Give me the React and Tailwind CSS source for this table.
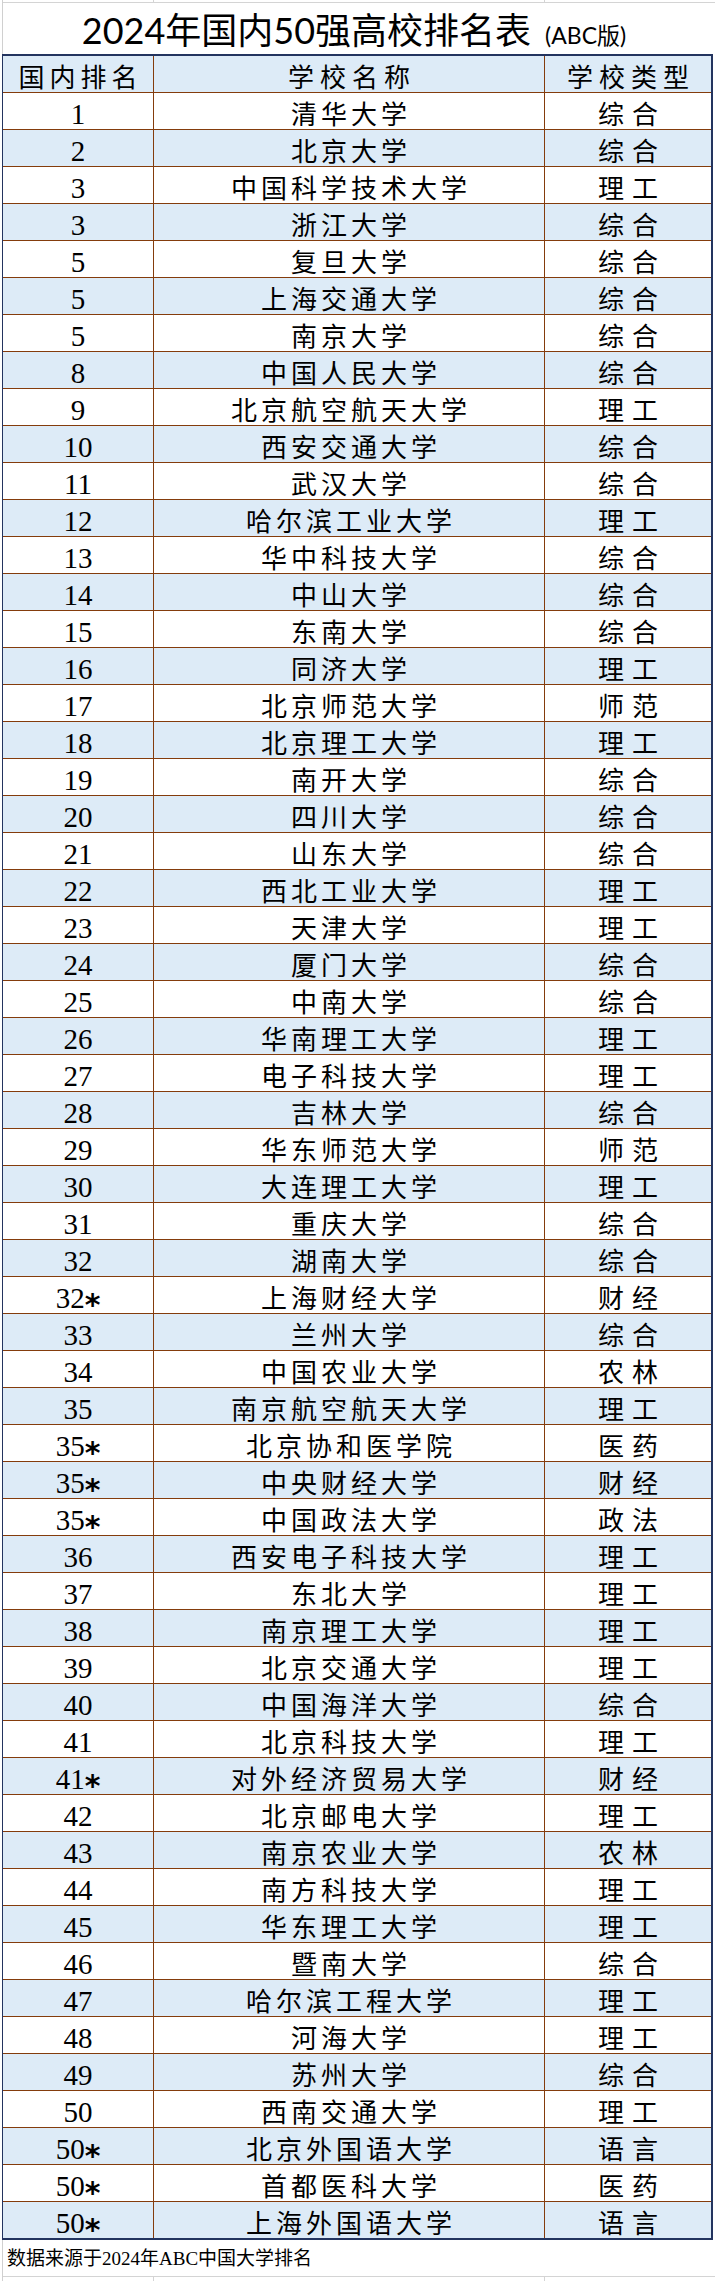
import React from 'react';

const rows = [
  ['1', '清华大学', '综合'],
  ['2', '北京大学', '综合'],
  ['3', '中国科学技术大学', '理工'],
  ['3', '浙江大学', '综合'],
  ['5', '复旦大学', '综合'],
  ['5', '上海交通大学', '综合'],
  ['5', '南京大学', '综合'],
  ['8', '中国人民大学', '综合'],
  ['9', '北京航空航天大学', '理工'],
  ['10', '西安交通大学', '综合'],
  ['11', '武汉大学', '综合'],
  ['12', '哈尔滨工业大学', '理工'],
  ['13', '华中科技大学', '综合'],
  ['14', '中山大学', '综合'],
  ['15', '东南大学', '综合'],
  ['16', '同济大学', '理工'],
  ['17', '北京师范大学', '师范'],
  ['18', '北京理工大学', '理工'],
  ['19', '南开大学', '综合'],
  ['20', '四川大学', '综合'],
  ['21', '山东大学', '综合'],
  ['22', '西北工业大学', '理工'],
  ['23', '天津大学', '理工'],
  ['24', '厦门大学', '综合'],
  ['25', '中南大学', '综合'],
  ['26', '华南理工大学', '理工'],
  ['27', '电子科技大学', '理工'],
  ['28', '吉林大学', '综合'],
  ['29', '华东师范大学', '师范'],
  ['30', '大连理工大学', '理工'],
  ['31', '重庆大学', '综合'],
  ['32', '湖南大学', '综合'],
  ['32*', '上海财经大学', '财经'],
  ['33', '兰州大学', '综合'],
  ['34', '中国农业大学', '农林'],
  ['35', '南京航空航天大学', '理工'],
  ['35*', '北京协和医学院', '医药'],
  ['35*', '中央财经大学', '财经'],
  ['35*', '中国政法大学', '政法'],
  ['36', '西安电子科技大学', '理工'],
  ['37', '东北大学', '理工'],
  ['38', '南京理工大学', '理工'],
  ['39', '北京交通大学', '理工'],
  ['40', '中国海洋大学', '综合'],
  ['41', '北京科技大学', '理工'],
  ['41*', '对外经济贸易大学', '财经'],
  ['42', '北京邮电大学', '理工'],
  ['43', '南京农业大学', '农林'],
  ['44', '南方科技大学', '理工'],
  ['45', '华东理工大学', '理工'],
  ['46', '暨南大学', '综合'],
  ['47', '哈尔滨工程大学', '理工'],
  ['48', '河海大学', '理工'],
  ['49', '苏州大学', '综合'],
  ['50', '西南交通大学', '理工'],
  ['50*', '北京外国语大学', '语言'],
  ['50*', '首都医科大学', '医药'],
  ['50*', '上海外国语大学', '语言'],
];

const cellFont = "font-['Liberation_Serif','Noto_Sans_CJK_SC',serif] text-black leading-none";

// rank like "35*": asterisk sits mid-height next to the digits
const Rank = ({ value }) => {
  const star = value.endsWith('*');
  const num = star ? value.slice(0, -1) : value;
  return (
    <span className="text-[29px] whitespace-nowrap">
      {num}
      {star && (
        <span className="relative top-[7px] font-['DejaVu_Sans',sans-serif] font-bold text-[30px] leading-[0]">*</span>
      )}
    </span>
  );
};

const App = () => {
  return (
    <div className="w-[715px] min-h-[2281px] bg-white">
      <div className="ml-[2px] w-[713px] border-l border-[#d0d0d0]">
        {/* grid lines above the title */}
        <div className="h-[3px] grid grid-cols-[151px_391px_1fr] border-b border-[#d4d4d4]">
          <div className="border-r border-[#d4d4d4]" />
          <div className="border-r border-[#d4d4d4]" />
          <div />
        </div>

        {/* Title */}
        <div className="h-[51px] flex items-end justify-center pb-[6px] pr-[10px] font-['Lato','Noto_Sans_CJK_SC',sans-serif] text-black">
          <div className="text-[36px] leading-none whitespace-nowrap">
            2024年国内50强高校排名表
            <span className="ml-[14px] text-[23px] leading-none">(ABC版)</span>
          </div>
        </div>

        {/* Table */}
        <div className="-ml-[1px] w-[711px] border-l border-t-2 border-r-2 border-b-2 border-[#23345f]">
          <div className={`grid grid-cols-[151px_391px_166px] h-[37px] border-b border-[#843c0c] bg-[#ddebf7] ${cellFont}`}>
            <div className="border-r border-[#843c0c] flex items-end justify-center">
              <span className="text-[26px] tracking-[5px] pl-[5px]">国内排名</span>
            </div>
            <div className="border-r border-[#843c0c] flex items-end justify-center">
              <span className="text-[26px] tracking-[6px] pl-[6px]">学校名称</span>
            </div>
            <div className="flex items-end justify-center">
              <span className="text-[26px] tracking-[6px] pl-[6px]">学校类型</span>
            </div>
          </div>

          {rows.map(([rank, name, type], i) => (
            <div
              key={i}
              className={`grid grid-cols-[151px_391px_166px] ${i === rows.length - 1 ? 'h-[36px]' : 'h-[37px] border-b border-[#843c0c]'} ${i % 2 ? 'bg-[#ddebf7]' : 'bg-white'} ${cellFont}`}
            >
              <div className="border-r border-[#843c0c] flex items-end justify-center">
                <Rank value={rank} />
              </div>
              <div className="border-r border-[#843c0c] flex items-end justify-center">
                <span className="text-[26px] tracking-[4px] pl-[4px] whitespace-nowrap">{name}</span>
              </div>
              <div className="flex items-end justify-center">
                <span className="text-[26px] tracking-[8px] pl-[8px] whitespace-nowrap">{type}</span>
              </div>
            </div>
          ))}
        </div>

        {/* Source note */}
        <div className="h-[37px] flex items-center pl-[4px] border-b border-[#d4d4d4]">
          <span className="font-['Liberation_Serif','Noto_Sans_CJK_SC',serif] text-[19px] leading-none text-black">
            数据来源于2024年ABC中国大学排名
          </span>
        </div>
        <div className="h-[6px] grid grid-cols-[151px_391px_1fr]">
          <div className="border-r border-[#d4d4d4]" />
          <div className="border-r border-[#d4d4d4]" />
          <div />
        </div>
      </div>
    </div>
  );
};

export default App;
